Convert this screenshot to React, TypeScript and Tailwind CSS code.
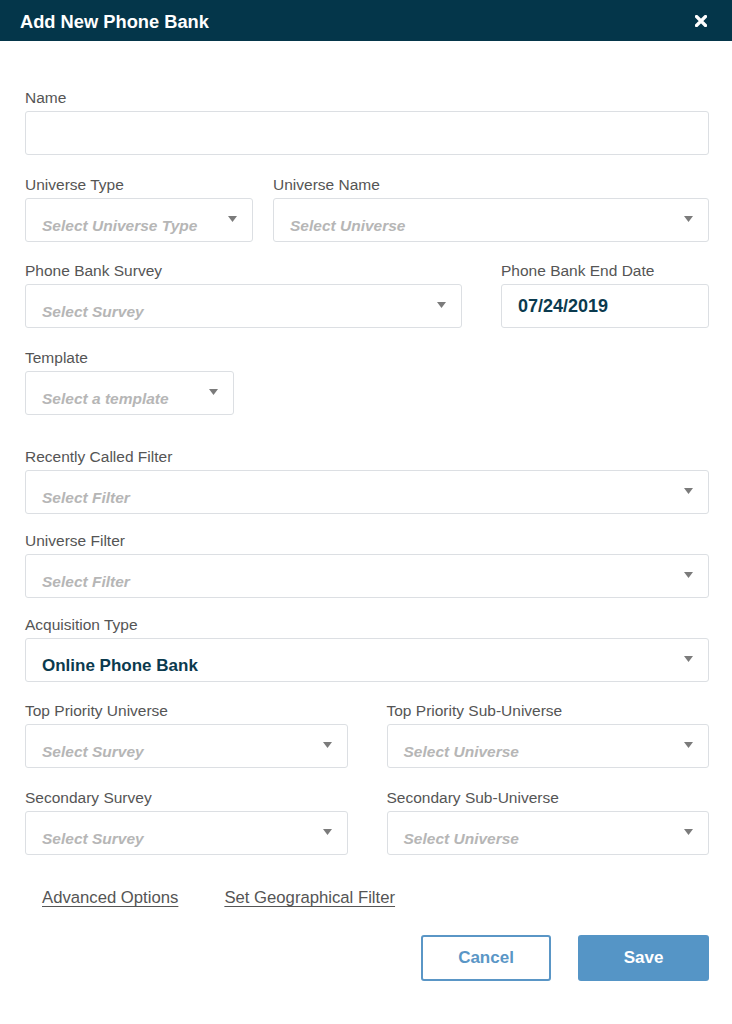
const font = { fontFamily: '"Liberation Sans", Arial, sans-serif' };

function Caret() {
  return (
    <svg width="9" height="6" viewBox="0 0 9 6" className="absolute right-[15px] top-[17px]">
      <path d="M0 0 H9 L4.5 6 Z" fill="#7b7b7b" />
    </svg>
  );
}

function Field({
  label,
  value,
  placeholder,
  caret = true,
  className = '',
  center = false,
  big = false,
}: {
  label: string;
  value?: string;
  placeholder?: string;
  caret?: boolean;
  className?: string;
  center?: boolean;
  big?: boolean;
}) {
  return (
    <div className={`flex flex-col ${className}`}>
      <div className="h-[22px] leading-[22px] text-[15.5px] text-[#555555] mb-[2px] whitespace-nowrap">{label}</div>
      <div
        className={`relative h-[44px] rounded-[3px] border border-[#dcdfe3] bg-white pl-[16px] flex ${
          center ? 'items-center' : 'items-start pt-[16px]'
        }`}
      >
        {value ? (
          <span className={`${big ? 'text-[18px]' : 'text-[17px]'} font-bold text-[#0b3a4e] leading-[21px]`}>{value}</span>
        ) : placeholder ? (
          <span className="text-[15.5px] font-bold italic text-[#b6b6b6] leading-[21px]">{placeholder}</span>
        ) : null}
        {caret && <Caret />}
      </div>
    </div>
  );
}

export default function App() {
  return (
    <div className="w-[732px] h-[1024px] bg-white" style={font}>
      {/* Header */}
      <div className="h-[41px] bg-[#04364a] flex items-center justify-between pl-[20px] pr-[25px]">
        <h1 className="text-[18.3px] font-bold text-white pt-[2px]">Add New Phone Bank</h1>
        <svg width="12" height="12" viewBox="0 0 12 12">
          <path d="M1.5 1.5 L10.5 10.5 M10.5 1.5 L1.5 10.5" stroke="#ffffff" strokeWidth="3.2" strokeLinecap="round" />
        </svg>
      </div>

      <div className="pl-[25px] pr-[23px] pt-[46px]">
        <Field label="Name" caret={false} />

        <div className="flex gap-[20px] mt-[19px]">
          <Field label="Universe Type" placeholder="Select Universe Type" className="w-[228px]" />
          <Field label="Universe Name" placeholder="Select Universe" className="flex-1" />
        </div>

        <div className="flex gap-[39px] mt-[18px]">
          <Field label="Phone Bank Survey" placeholder="Select Survey" className="w-[437px]" />
          <Field label="Phone Bank End Date" value="07/24/2019" caret={false} center big className="flex-1" />
        </div>

        <div className="flex mt-[19px]">
          <Field label="Template" placeholder="Select a template" className="w-[209px]" />
        </div>

        <Field label="Recently Called Filter" placeholder="Select Filter" className="mt-[31px]" />
        <Field label="Universe Filter" placeholder="Select Filter" className="mt-[16px]" />
        <Field label="Acquisition Type" value="Online Phone Bank" className="mt-[16px]" />

        <div className="grid grid-cols-2 gap-x-[39px] mt-[18px]">
          <Field label="Top Priority Universe" placeholder="Select Survey" />
          <Field label="Top Priority Sub-Universe" placeholder="Select Universe" />
        </div>
        <div className="grid grid-cols-2 gap-x-[39px] mt-[19px]">
          <Field label="Secondary Survey" placeholder="Select Survey" />
          <Field label="Secondary Sub-Universe" placeholder="Select Universe" />
        </div>

        <div className="flex gap-[46px] pl-[17px] mt-[34px] text-[16.7px] text-[#555555] leading-[18px]">
          <a className="underline underline-offset-[3px]">Advanced Options</a>
          <a className="underline underline-offset-[3px]">Set Geographical Filter</a>
        </div>

        <div className="flex justify-end gap-[27px] mt-[28px]">
          <button className="w-[130px] h-[46px] rounded-[3px] border-2 border-[#5a96c6] text-[#5a96c6] font-bold text-[17px] bg-white">
            Cancel
          </button>
          <button className="w-[131px] h-[46px] rounded-[3px] bg-[#5595c6] text-white font-bold text-[17px]">
            Save
          </button>
        </div>
      </div>
    </div>
  );
}
